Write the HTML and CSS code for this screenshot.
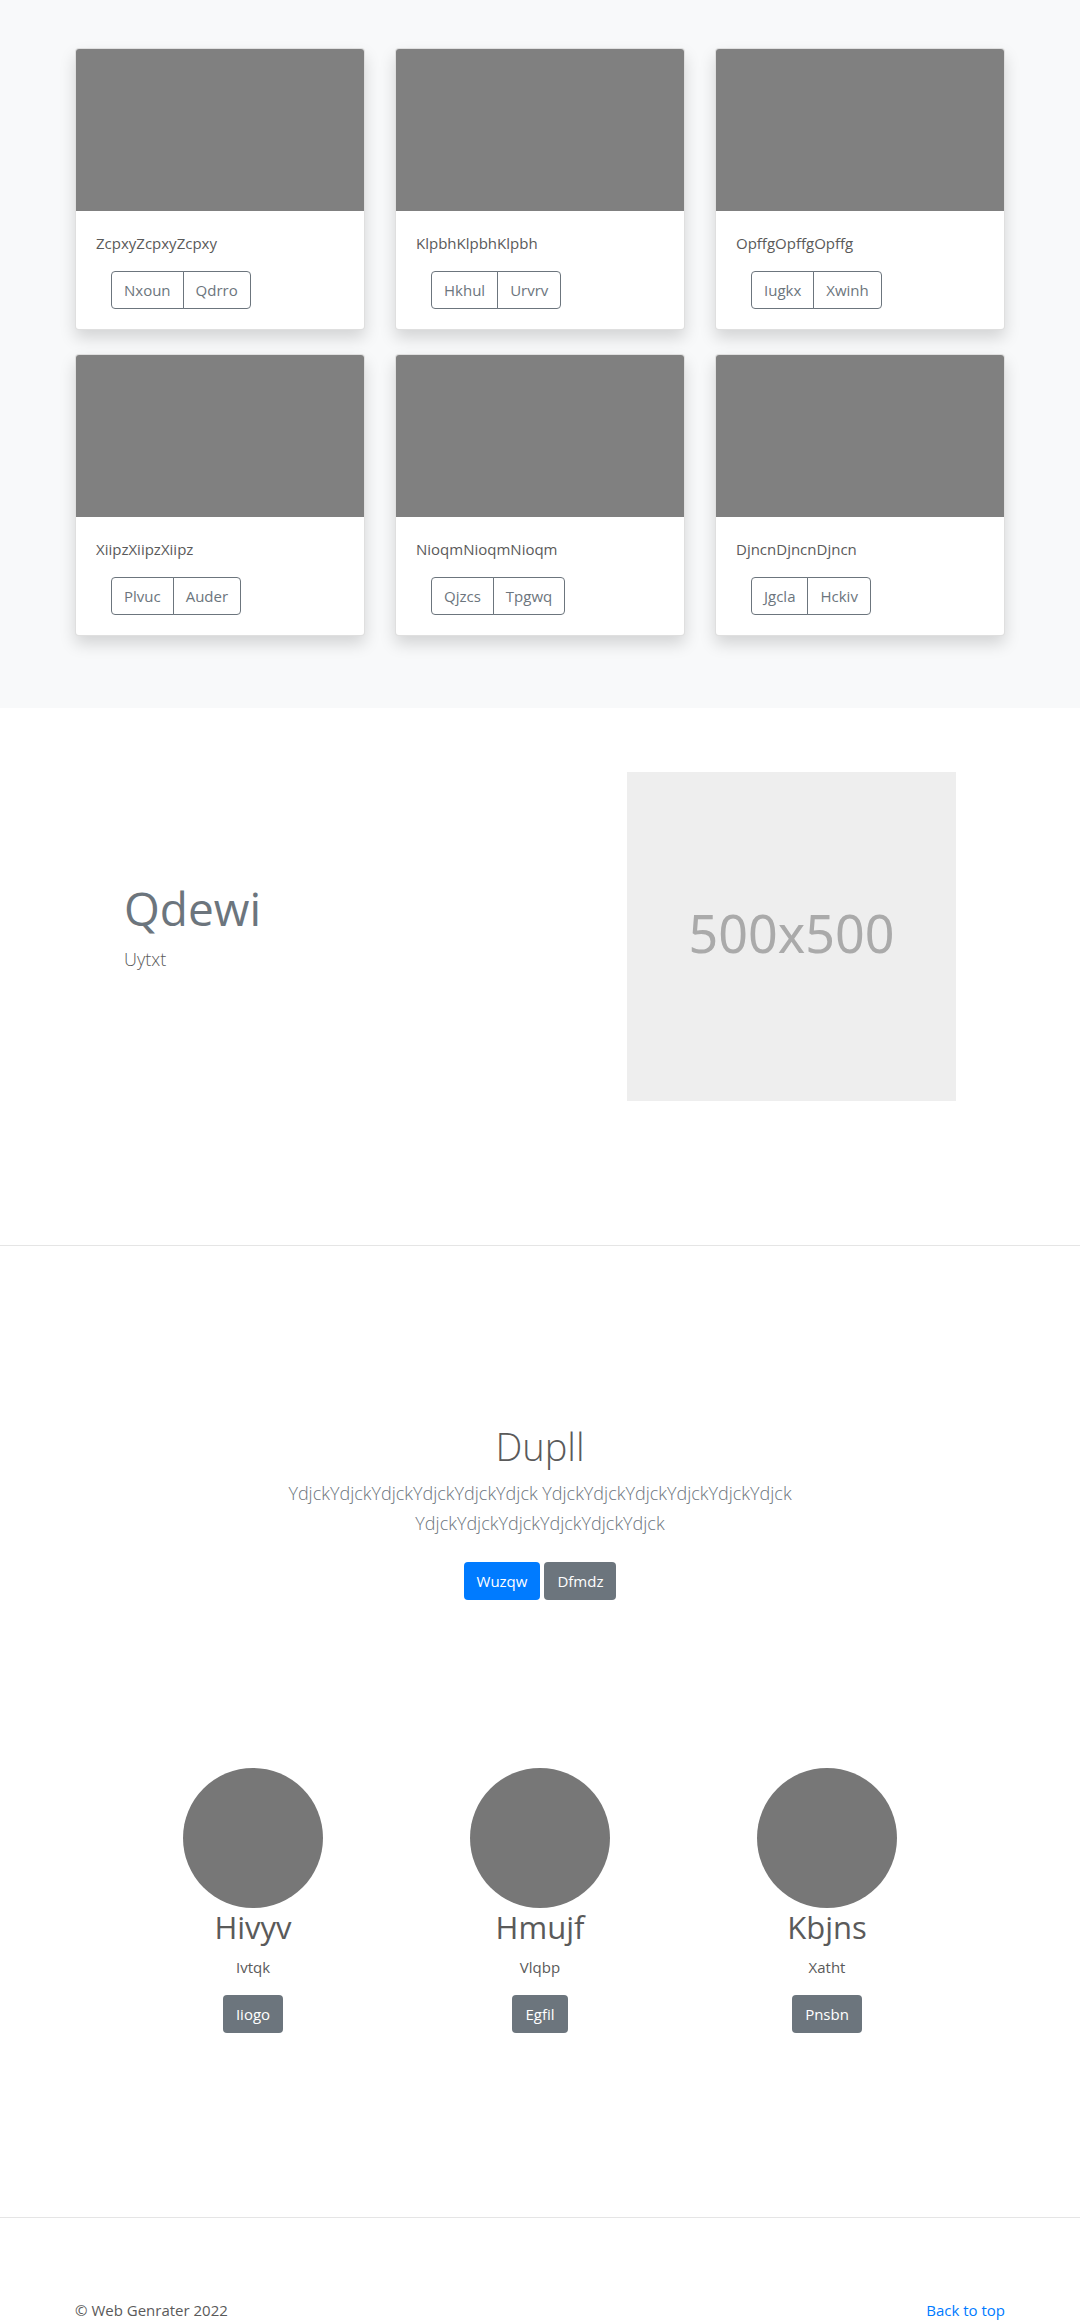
FILE: index.html
```
<!DOCTYPE html>
<html lang="en">
<head>
<meta charset="utf-8">
<meta name="viewport" content="width=device-width, initial-scale=1">
<title>Web Genrater</title>
<link rel="stylesheet" href="styles.css">
</head>
<body>
<main>
  <section class="album">
    <div class="album-grid">
      <article class="card">
        <div class="card-image"></div>
        <div class="card-body">
          <p class="card-text">ZcpxyZcpxyZcpxy</p>
          <div class="btn-group"><button type="button" class="btn btn-outline">Nxoun</button><button type="button" class="btn btn-outline">Qdrro</button></div>
        </div>
      </article>
      <article class="card">
        <div class="card-image"></div>
        <div class="card-body">
          <p class="card-text">KlpbhKlpbhKlpbh</p>
          <div class="btn-group"><button type="button" class="btn btn-outline">Hkhul</button><button type="button" class="btn btn-outline">Urvrv</button></div>
        </div>
      </article>
      <article class="card">
        <div class="card-image"></div>
        <div class="card-body">
          <p class="card-text">OpffgOpffgOpffg</p>
          <div class="btn-group"><button type="button" class="btn btn-outline">Iugkx</button><button type="button" class="btn btn-outline">Xwinh</button></div>
        </div>
      </article>
      <article class="card">
        <div class="card-image"></div>
        <div class="card-body">
          <p class="card-text">XiipzXiipzXiipz</p>
          <div class="btn-group"><button type="button" class="btn btn-outline">Plvuc</button><button type="button" class="btn btn-outline">Auder</button></div>
        </div>
      </article>
      <article class="card">
        <div class="card-image"></div>
        <div class="card-body">
          <p class="card-text">NioqmNioqmNioqm</p>
          <div class="btn-group"><button type="button" class="btn btn-outline">Qjzcs</button><button type="button" class="btn btn-outline">Tpgwq</button></div>
        </div>
      </article>
      <article class="card">
        <div class="card-image"></div>
        <div class="card-body">
          <p class="card-text">DjncnDjncnDjncn</p>
          <div class="btn-group"><button type="button" class="btn btn-outline">Jgcla</button><button type="button" class="btn btn-outline">Hckiv</button></div>
        </div>
      </article>
    </div>
  </section>

  <section class="feature">
    <div class="feature-copy">
      <h2 class="feature-title">Qdewi</h2>
      <p class="lead">Uytxt</p>
    </div>
    <div class="placeholder">500x500</div>
  </section>

  <hr class="divider">

  <section class="intro">
    <h1 class="intro-title">Dupll</h1>
    <p class="lead lead-muted">YdjckYdjckYdjckYdjckYdjckYdjck YdjckYdjckYdjckYdjckYdjckYdjck YdjckYdjckYdjckYdjckYdjckYdjck</p>
    <div class="intro-actions">
      <a class="btn btn-primary" href="#">Wuzqw</a>
      <a class="btn btn-secondary" href="#">Dfmdz</a>
    </div>
  </section>

  <section class="people">
    <div class="person">
      <div class="avatar"></div>
      <h2 class="person-name">Hivyv</h2>
      <p class="person-text">Ivtqk</p>
      <a class="btn btn-secondary" href="#">Iiogo</a>
    </div>
    <div class="person">
      <div class="avatar"></div>
      <h2 class="person-name">Hmujf</h2>
      <p class="person-text">Vlqbp</p>
      <a class="btn btn-secondary" href="#">Egfil</a>
    </div>
    <div class="person">
      <div class="avatar"></div>
      <h2 class="person-name">Kbjns</h2>
      <p class="person-text">Xatht</p>
      <a class="btn btn-secondary" href="#">Pnsbn</a>
    </div>
  </section>

  <hr class="divider">
</main>
<footer class="footer">
  <span>© Web Genrater 2022</span>
  <a class="footer-link" href="#">Back to top</a>
</footer>
</body>
</html>
```
FILE: styles.css
```
* {
  box-sizing: border-box;
}

body {
  margin: 0;
  background: #fff;
  color: #5a5a5a;
  font-family: "Segoe UI", "Open Sans", "Noto Sans", sans-serif;
  font-size: 15px;
  line-height: 24px;
}

h1,
h2,
p {
  margin: 0;
}

.album {
  padding: 48px 15px 72px;
  background: #f8f9fa;
}

.album-grid {
  display: grid;
  grid-template-columns: repeat(3, 1fr);
  gap: 24px 30px;
  max-width: 930px;
  margin: 0 auto;
}

@media (max-width: 720px) {
  .album-grid {
    grid-template-columns: 1fr;
  }
}

.card {
  overflow: hidden;
  background: #fff;
  background-clip: border-box;
  border: 1px solid rgba(0, 0, 0, 0.125);
  border-radius: 4px;
  box-shadow: 0 8px 16px rgba(0, 0, 0, 0.15);
}

.card-image {
  aspect-ratio: 16 / 9;
  background: #808080;
}

.card-body {
  padding: 20px;
}

.card-text {
  margin-bottom: 16px;
}

.btn {
  display: inline-block;
  padding: 6px 12px;
  border: 1px solid transparent;
  border-radius: 4px;
  font: inherit;
  text-decoration: none;
  cursor: pointer;
}

.btn-group {
  display: flex;
  margin-left: 15px;
}

.btn-outline {
  background: transparent;
  border-color: #6c757d;
  color: #6c757d;
}

.btn-outline:first-child {
  border-top-right-radius: 0;
  border-bottom-right-radius: 0;
}

.btn-outline:last-child {
  margin-left: -1px;
  border-top-left-radius: 0;
  border-bottom-left-radius: 0;
}

.btn-primary {
  background: #007bff;
  color: #fff;
}

.btn-secondary {
  background: #6c757d;
  color: #fff;
}

.feature {
  display: flex;
  justify-content: space-between;
  align-items: flex-start;
  max-width: 862px;
  margin: 0 auto;
  padding: 64px 15px 144px;
}

.feature-copy {
  padding-top: 104px;
}

.feature-title {
  margin-bottom: 4px;
  color: #6c757d;
  font-size: 46px;
  font-weight: 400;
  line-height: 64px;
}

.lead {
  font-size: 18px;
  font-weight: 300;
  line-height: 30px;
}

.lead-muted {
  color: #6c757d;
}

.placeholder {
  display: flex;
  justify-content: center;
  align-items: center;
  flex: 0 1 329px;
  aspect-ratio: 1;
  padding-bottom: 8px;
  background: #eee;
  color: #aaa;
  font-family: "Noto Sans", sans-serif;
  font-size: 52px;
}

.divider {
  margin: 0;
  border: 0;
  border-top: 1px solid #e5e5e5;
}

.intro {
  max-width: 620px;
  margin: 0 auto;
  padding: 176px 15px 168px;
  text-align: center;
}

.intro-title {
  margin-bottom: 8px;
  font-size: 38px;
  font-weight: 300;
  line-height: 48px;
}

.intro-actions {
  display: flex;
  justify-content: center;
  gap: 4px;
  margin-top: 24px;
}

.people {
  display: grid;
  grid-template-columns: repeat(3, 1fr);
  max-width: 861px;
  margin: 0 auto;
  padding-bottom: 184px;
}

.person {
  display: flex;
  flex-direction: column;
  align-items: center;
  text-align: center;
}

.avatar {
  width: 140px;
  height: 140px;
  border-radius: 50%;
  background: #777;
}

.person-name {
  margin-bottom: 8px;
  font-size: 31px;
  font-weight: 400;
  line-height: 39px;
}

.person-text {
  margin-bottom: 16px;
}

.footer {
  display: flex;
  justify-content: space-between;
  max-width: 960px;
  margin: 0 auto;
  padding: 80px 15px 0;
}

.footer-link {
  color: #007bff;
  text-decoration: none;
}
```
